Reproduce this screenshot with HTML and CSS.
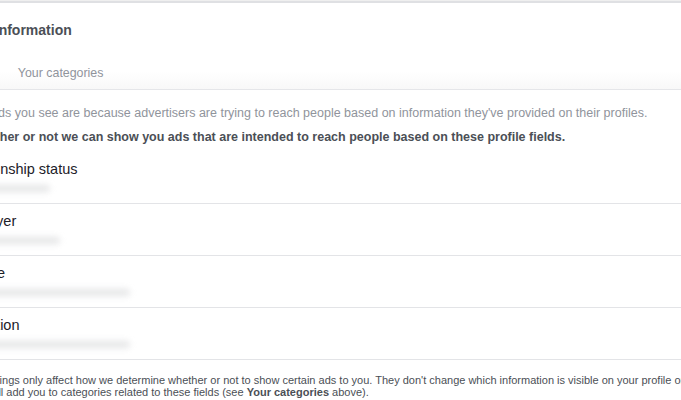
FILE: index.html
```html
<!DOCTYPE html>
<html lang="en">
<head>
  <meta charset="UTF-8">
  <meta name="viewport" content="width=device-width, initial-scale=1.0">
  <title>Ad Preferences - Your information</title>
  <link rel="stylesheet" href="styles.css">
</head>
<body>

  <div id="card">
    <div id="card-inner">
      <h2 class="card-title">Your information</h2>

      <div class="tabs">
        <span class="tab tab-active">About you</span>
        <span class="tab">Your categories</span>
      </div>

      <div class="section">
        <p class="intro">Some ads you see are because advertisers are trying to reach people based on information they've provided on their profiles.</p>
        <p class="intro-strong">Choose whether or not we can show you ads that are intended to reach people based on these profile fields.</p>

        <ul class="fields">
          <li class="field">
            <div class="field-name">Relationship status</div>
            <div class="field-value"><span class="smudge smudge-s"></span></div>
          </li>
          <li class="field">
            <div class="field-name">Employer</div>
            <div class="field-value"><span class="smudge smudge-m"></span></div>
          </li>
          <li class="field">
            <div class="field-name">Job title</div>
            <div class="field-value"><span class="smudge smudge-l"></span></div>
          </li>
          <li class="field">
            <div class="field-name">Education</div>
            <div class="field-value"><span class="smudge smudge-l"></span></div>
          </li>
        </ul>

        <p class="footnote">Settings only affect how we determine whether or not to show certain ads to you. They don't change which information is visible on your profile or who can see it.<br>We'll add you to categories related to these fields (see <b>Your categories</b> above).</p>
      </div>
    </div>
  </div>

</body>
</html>
```

FILE: styles.css
```css
/* Page is a cropped view of the card, so the content runs off the left edge */
html, body {
  overflow: hidden;
}

body {
  font-family: "Liberation Sans", Arial, sans-serif;
  background-color: #ffffff;
  margin: 0;
  padding: 1px 0 0 0;
  width: 681px;
  height: 400px;
  box-sizing: border-box;
}

#card {
  border-top: 2px solid #dfe0e3;
  box-shadow: 0 -1px 0 #efefef;
  background-color: #ffffff;
}

#card-inner {
  margin-left: -45px;
  width: 1000px;
}

.card-title {
  margin: 0;
  padding: 18px 0 0 5px;
  font-size: 14px;
  line-height: 18px;
  font-weight: bold;
  color: #4b4f56;
}

.tabs {
  display: flex;
  gap: 22px;
  padding: 26px 0 8px 0;
  margin-left: -45px;
  padding-left: 30px;
  border-bottom: 1px solid #e5e6e9;
  background: linear-gradient(to bottom, #ffffff 65%, #f8f8f8 100%);
}

.tab {
  font-size: 12.4px;
  line-height: 16px;
  color: #90949c;
}

.section {
  padding-top: 15px;
}

.intro {
  margin: 0;
  font-size: 12.5px;
  line-height: 16px;
  color: #90949c;
}

.intro-strong {
  margin: 8px 0 0 -33px;
  font-size: 12.5px;
  line-height: 16px;
  font-weight: bold;
  color: #4b4f56;
}

.fields {
  list-style: none;
  margin: 7px 0 0 0;
  padding: 0;
}

.field {
  padding: 8px 0 7px 0;
  border-bottom: 1px solid #e3e4e7;
}

.field-name {
  font-size: 14.5px;
  line-height: 18px;
  color: #1d2129;
}

.field-value {
  margin-top: 2px;
  height: 16px;
  display: flex;
  align-items: center;
}

/* blurred-out profile values */
.smudge {
  display: block;
  height: 7px;
  border-radius: 4px;
  background-color: #d4d5d7;
  filter: blur(3px);
  opacity: 0.6;
}

.smudge-s {
  width: 95px;
}

.smudge-m {
  width: 105px;
}

.smudge-l {
  width: 175px;
}

.footnote {
  margin: 14px 0 0 25px;
  font-size: 11px;
  line-height: 12px;
  color: #4b4f56;
  white-space: nowrap;
}

.footnote b {
  color: #4b4f56;
}
```
